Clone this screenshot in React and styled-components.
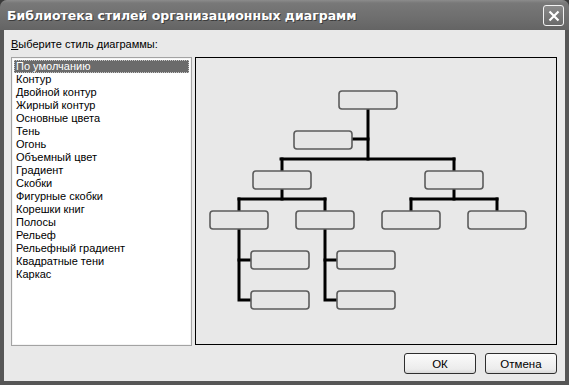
import React from "react";
import styled, { createGlobalStyle } from "styled-components";

const styles = [
  "По умолчанию",
  "Контур",
  "Двойной контур",
  "Жирный контур",
  "Основные цвета",
  "Тень",
  "Огонь",
  "Объемный цвет",
  "Градиент",
  "Скобки",
  "Фигурные скобки",
  "Корешки книг",
  "Полосы",
  "Рельеф",
  "Рельефный градиент",
  "Квадратные тени",
  "Каркас",
];

// boxes of the org chart, in panel coordinates
const boxes = [
  [142, 32],
  [97, 72],
  [56, 112],
  [228, 112],
  [13, 152],
  [99, 152],
  [185, 152],
  [271, 152],
  [54, 192],
  [54, 232],
  [140, 192],
  [140, 232],
];

const lines = [
  "M172 52 V101",
  "M157 81 H172",
  "M85 101 H258",
  "M86 101 V112",
  "M258 101 V112",
  "M86 132 V141",
  "M258 132 V141",
  "M43 141 H129",
  "M215 141 H301",
  "M43 141 V152",
  "M129 141 V152",
  "M215 141 V152",
  "M301 141 V152",
  "M43 172 V242 H54",
  "M43 202 H54",
  "M129 172 V242 H140",
  "M129 202 H140",
];

function OrgChart() {
  return (
    <svg width="360" height="286" viewBox="0 0 360 286">
      <g stroke="#000" strokeWidth="3" fill="none" strokeLinecap="square">
        {lines.map((d, i) => (
          <path key={i} d={d} />
        ))}
      </g>
      {boxes.map(([x, y], i) => (
        <rect
          key={i}
          x={x + 1}
          y={y + 1}
          width="58"
          height="18"
          rx="3"
          fill="#e6e6e6"
          stroke="#5c5c5c"
          strokeWidth="1.6"
        />
      ))}
    </svg>
  );
}

function App() {
  return (
    <>
      <Global />
      <Window>
        <TitleBar>
          <Title>Библиотека стилей организационных диаграмм</Title>
          <CloseButton>
            <svg width="12" height="12" viewBox="0 0 12 12">
              <path d="M1.5 1.5 L10.5 10.5 M10.5 1.5 L1.5 10.5" stroke="#fff" strokeWidth="2.2" />
            </svg>
          </CloseButton>
        </TitleBar>
        <Body>
          <Label>
            <u>В</u>ыберите стиль диаграммы:
          </Label>
          <Main>
            <List>
              {styles.map((s, i) => (
                <Item key={s} selected={i === 0}>
                  {s}
                </Item>
              ))}
            </List>
            <Preview>
              <OrgChart />
            </Preview>
          </Main>
          <Buttons>
            <Button>ОК</Button>
            <Button>Отмена</Button>
          </Buttons>
        </Body>
      </Window>
    </>
  );
}

const Global = createGlobalStyle`
  html, body {
    margin: 0;
    padding: 0;
    background: #3a3a3a;
  }
  body {
    font-family: "Liberation Sans", "DejaVu Sans", sans-serif;
  }
`;

const Window = styled.div`
  width: 569px;
  height: 385px;
  display: flex;
  flex-direction: column;
  background: #565656;
  border-radius: 7px 7px 0 0;
  overflow: hidden;
  box-sizing: border-box;
`;

const TitleBar = styled.div`
  height: 30px;
  flex: none;
  display: flex;
  align-items: center;
  justify-content: space-between;
  padding: 0 5px 0 7px;
  background: linear-gradient(#8c8c8c 0, #787878 3px, #6e6e6e 60%, #646464 100%);
`;

const Title = styled.div`
  color: #fff;
  font-family: "DejaVu Sans", sans-serif;
  font-weight: bold;
  font-size: 12.5px;
  text-shadow: 1px 1px 0 #3c3c3c;
  padding-top: 1px;
`;

const CloseButton = styled.div`
  width: 19px;
  height: 19px;
  border: 1px solid #f2f2f2;
  border-radius: 3px;
  background: linear-gradient(#8a8a8a, #6a6a6a);
  display: flex;
  align-items: center;
  justify-content: center;
  margin-top: 1px;
`;

const Body = styled.div`
  flex: 1;
  margin: 0 4px 4px 4px;
  background: #e9e9e9;
  padding: 8px 8px 0 7px;
  display: flex;
  flex-direction: column;
  font-size: 11px;
  color: #000;
`;

const Label = styled.div`
  line-height: 13px;
  height: 13px;
  margin-bottom: 6px;
  u {
    text-decoration: underline;
    text-underline-offset: 1px;
  }
`;

const Main = styled.div`
  display: flex;
  gap: 3px;
  height: 289px;
`;

const List = styled.div`
  width: 183px;
  box-sizing: border-box;
  border: 1px solid #a3a3a3;
  box-shadow: inset 0 0 0 1px #f4f4f4;
  background: #fff;
  padding: 2px;
`;

const Item = styled.div`
  height: 13px;
  line-height: 13px;
  padding-left: 2px;
  white-space: nowrap;
  color: ${(p) => (p.selected ? "#fff" : "#000")};
  background: ${(p) => (p.selected ? "#6b6b6b" : "transparent")};
  outline: ${(p) => (p.selected ? "1px dotted #c8c8c8" : "none")};
  outline-offset: -1px;
`;

const Preview = styled.div`
  width: 362px;
  height: 288px;
  box-sizing: border-box;
  border: 1px solid #000;
  background: #e8e8e8;
`;

const Buttons = styled.div`
  display: flex;
  justify-content: flex-end;
  gap: 9px;
  margin-top: 7px;
`;

const Button = styled.div`
  width: 72px;
  height: 21px;
  box-sizing: border-box;
  border: 1px solid #2e2e2e;
  border-radius: 3px;
  background: linear-gradient(#fbfbfb, #ececec 80%, #d8d8d8);
  display: flex;
  align-items: center;
  justify-content: center;
  font-size: 11.5px;
`;

export default App;
